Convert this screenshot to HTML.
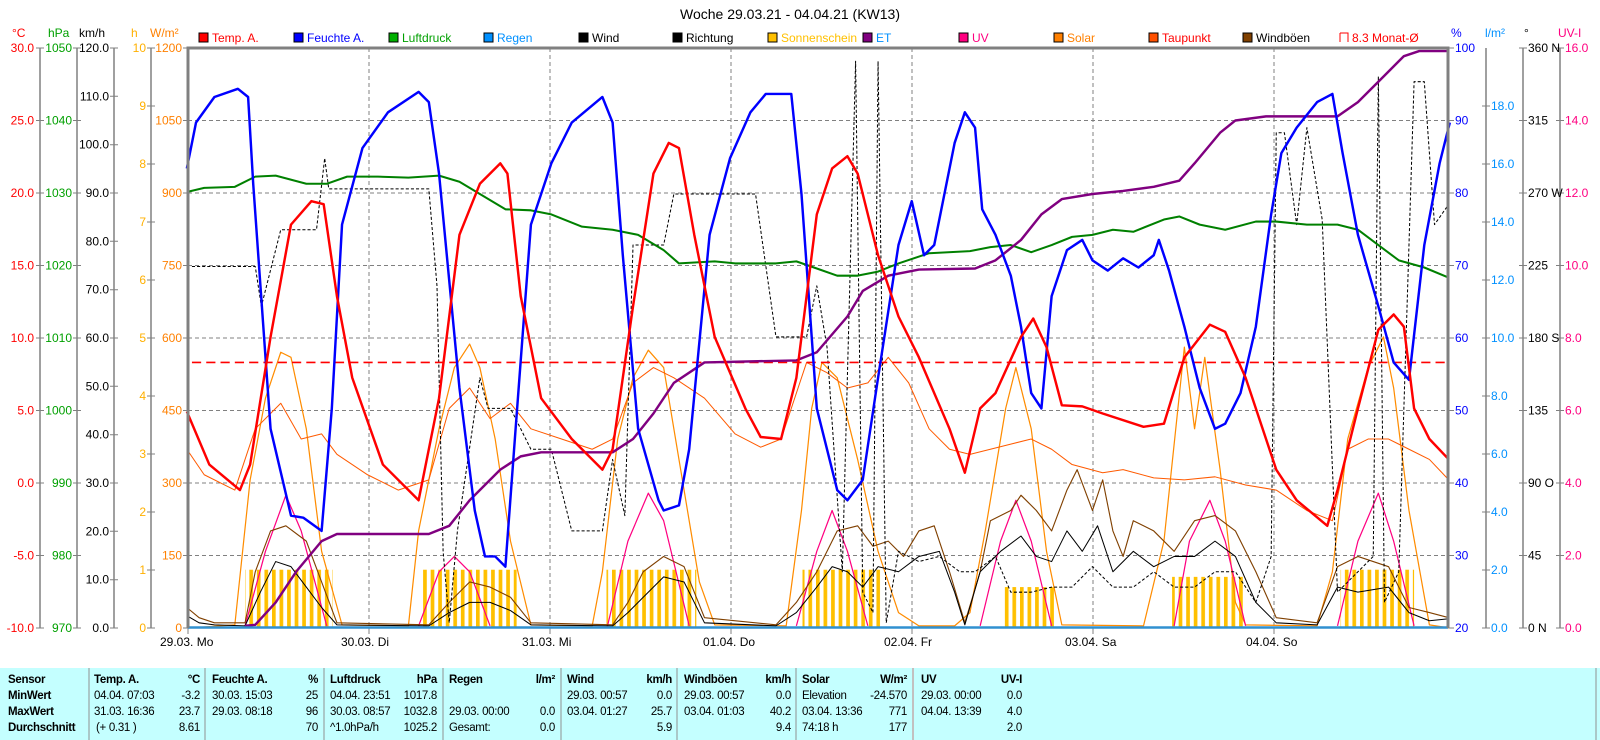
<!DOCTYPE html>
<html><head><meta charset="utf-8"><style>
html,body{margin:0;padding:0;background:#fff;width:1600px;height:740px;overflow:hidden}
svg{display:block;font-family:"Liberation Sans",sans-serif}
</style></head><body>
<svg width="1600" height="740" viewBox="0 0 1600 740" xmlns="http://www.w3.org/2000/svg">
<defs>
<pattern id="bars" x="0" y="0" width="7.4" height="100" patternUnits="userSpaceOnUse"><rect x="0" y="0" width="3.6" height="100" fill="#ffc000"/></pattern>
</defs>
<text x="790" y="19" font-size="14" text-anchor="middle" fill="#000">Woche 29.03.21 - 04.04.21 (KW13)</text>
<!-- axis headers -->
<g font-size="12">
<text x="12" y="37" fill="#f00">°C</text>
<text x="48" y="37" fill="#00a000">hPa</text>
<text x="79" y="37" fill="#000">km/h</text>
<text x="131" y="37" fill="#ffb000">h</text>
<text x="150" y="37" fill="#ff8000">W/m²</text>
<text x="1451" y="37" fill="#0000ff">%</text>
<text x="1485" y="37" fill="#0090ff">l/m²</text>
<text x="1524" y="37" fill="#000">°</text>
<text x="1558" y="37" fill="#ff0080">UV-I</text>
</g>
<!-- legend -->
<g font-size="12">
<rect x="199" y="33" width="9" height="9" fill="#f00" stroke="#000"/><text x="212" y="42" fill="#f00">Temp. A.</text>
<rect x="294" y="33" width="9" height="9" fill="#00f" stroke="#000"/><text x="307" y="42" fill="#00f">Feuchte A.</text>
<rect x="389" y="33" width="9" height="9" fill="#00b000" stroke="#000"/><text x="402" y="42" fill="#00a000">Luftdruck</text>
<rect x="484" y="33" width="9" height="9" fill="#0090ff" stroke="#000"/><text x="497" y="42" fill="#0090ff">Regen</text>
<rect x="579" y="33" width="9" height="9" fill="#000" stroke="#000"/><text x="592" y="42" fill="#000">Wind</text>
<rect x="673" y="33" width="9" height="9" fill="#000" stroke="#000"/><text x="686" y="42" fill="#000">Richtung</text>
<rect x="768" y="33" width="9" height="9" fill="#ffc000" stroke="#000"/><text x="781" y="42" fill="#ffc000">Sonnenschein</text>
<rect x="863" y="33" width="9" height="9" fill="#800080" stroke="#000"/><text x="876" y="42" fill="#0090ff">ET</text>
<rect x="959" y="33" width="9" height="9" fill="#ff0080" stroke="#000"/><text x="972" y="42" fill="#ff0080">UV</text>
<rect x="1054" y="33" width="9" height="9" fill="#ff8000" stroke="#000"/><text x="1067" y="42" fill="#ff8000">Solar</text>
<rect x="1149" y="33" width="9" height="9" fill="#ff5000" stroke="#000"/><text x="1162" y="42" fill="#f00">Taupunkt</text>
<rect x="1243" y="33" width="9" height="9" fill="#804000" stroke="#000"/><text x="1256" y="42" fill="#000">Windböen</text>
<path d="M1340 33 V42 M1340 33 H1348 V42" stroke="#f00" fill="none"/><text x="1352" y="42" fill="#f00">8.3 Monat-Ø</text>
</g>
<!-- left axes -->
<g stroke="#808080" stroke-width="1.5" fill="none">
<path d="M40 48V628M77 48V628M114 48V628M151 48V628"/>
<path d="M1486 48V628M1523 48V628M1560 48V628"/>
</g>
<g stroke="#808080" stroke-width="1">
<path d="M36 48h8M36 120.5h8M36 193h8M36 265.5h8M36 338h8M36 410.5h8M36 483h8M36 555.5h8M36 628h8"/>
<path d="M73 48h8M73 120.5h8M73 193h8M73 265.5h8M73 338h8M73 410.5h8M73 483h8M73 555.5h8M73 628h8"/>
<path d="M110 48h8M110 96.3h8M110 144.7h8M110 193h8M110 241.3h8M110 289.7h8M110 338h8M110 386.3h8M110 434.7h8M110 483h8M110 531.3h8M110 579.7h8M110 628h8"/>
<path d="M147 48h8M147 106h8M147 164h8M147 222h8M147 280h8M147 338h8M147 396h8M147 454h8M147 512h8M147 570h8M147 628h8"/>
<path d="M183 48h5M183 120.5h5M183 193h5M183 265.5h5M183 338h5M183 410.5h5M183 483h5M183 555.5h5M183 628h5"/>
<path d="M1448 48h6M1448 120.5h6M1448 193h6M1448 265.5h6M1448 338h6M1448 410.5h6M1448 483h6M1448 555.5h6M1448 628h6"/>
<path d="M1482 106h8M1482 164h8M1482 222h8M1482 280h8M1482 338h8M1482 396h8M1482 454h8M1482 512h8M1482 570h8M1482 628h8"/>
<path d="M1519 48h8M1519 120.5h8M1519 193h8M1519 265.5h8M1519 338h8M1519 410.5h8M1519 483h8M1519 555.5h8M1519 628h8"/>
<path d="M1556 48h8M1556 120.5h8M1556 193h8M1556 265.5h8M1556 338h8M1556 410.5h8M1556 483h8M1556 555.5h8M1556 628h8"/>
</g>
<g font-size="12" text-anchor="end">
<g fill="#f00"><text x="34" y="52">30.0</text><text x="34" y="124.5">25.0</text><text x="34" y="197">20.0</text><text x="34" y="269.5">15.0</text><text x="34" y="342">10.0</text><text x="34" y="414.5">5.0</text><text x="34" y="487">0.0</text><text x="34" y="559.5">-5.0</text><text x="34" y="632">-10.0</text></g>
<g fill="#00a000"><text x="72" y="52">1050</text><text x="72" y="124.5">1040</text><text x="72" y="197">1030</text><text x="72" y="269.5">1020</text><text x="72" y="342">1010</text><text x="72" y="414.5">1000</text><text x="72" y="487">990</text><text x="72" y="559.5">980</text><text x="72" y="632">970</text></g>
<g fill="#000"><text x="109" y="52">120.0</text><text x="109" y="100.3">110.0</text><text x="109" y="148.7">100.0</text><text x="109" y="197">90.0</text><text x="109" y="245.3">80.0</text><text x="109" y="293.7">70.0</text><text x="109" y="342">60.0</text><text x="109" y="390.3">50.0</text><text x="109" y="438.7">40.0</text><text x="109" y="487">30.0</text><text x="109" y="535.3">20.0</text><text x="109" y="583.7">10.0</text><text x="109" y="632">0.0</text></g>
<g fill="#ffb000"><text x="146" y="52">10</text><text x="146" y="110">9</text><text x="146" y="168">8</text><text x="146" y="226">7</text><text x="146" y="284">6</text><text x="146" y="342">5</text><text x="146" y="400">4</text><text x="146" y="458">3</text><text x="146" y="516">2</text><text x="146" y="574">1</text><text x="146" y="632">0</text></g>
<g fill="#ff8000"><text x="182" y="52">1200</text><text x="182" y="124.5">1050</text><text x="182" y="197">900</text><text x="182" y="269.5">750</text><text x="182" y="342">600</text><text x="182" y="414.5">450</text><text x="182" y="487">300</text><text x="182" y="559.5">150</text><text x="182" y="632">0</text></g>
</g>
<g font-size="12">
<g fill="#0000ff"><text x="1455" y="52">100</text><text x="1455" y="124.5">90</text><text x="1455" y="197">80</text><text x="1455" y="269.5">70</text><text x="1455" y="342">60</text><text x="1455" y="414.5">50</text><text x="1455" y="487">40</text><text x="1455" y="559.5">30</text><text x="1455" y="632">20</text></g>
<g fill="#0090ff"><text x="1491" y="110">18.0</text><text x="1491" y="168">16.0</text><text x="1491" y="226">14.0</text><text x="1491" y="284">12.0</text><text x="1491" y="342">10.0</text><text x="1491" y="400">8.0</text><text x="1491" y="458">6.0</text><text x="1491" y="516">4.0</text><text x="1491" y="574">2.0</text><text x="1491" y="632">0.0</text></g>
<g fill="#000"><text x="1528" y="52">360 N</text><text x="1528" y="124.5">315</text><text x="1528" y="197">270 W</text><text x="1528" y="269.5">225</text><text x="1528" y="342">180 S</text><text x="1528" y="414.5">135</text><text x="1528" y="487">90  O</text><text x="1528" y="559.5">45</text><text x="1528" y="632">0    N</text></g>
<g fill="#ff0080"><text x="1565" y="52">16.0</text><text x="1565" y="124.5">14.0</text><text x="1565" y="197">12.0</text><text x="1565" y="269.5">10.0</text><text x="1565" y="342">8.0</text><text x="1565" y="414.5">6.0</text><text x="1565" y="487">4.0</text><text x="1565" y="559.5">2.0</text><text x="1565" y="632">0.0</text></g>
</g>
<!-- grid -->
<g stroke="#808080" stroke-width="1" stroke-dasharray="4,3">
<path d="M188 120.5H1448M188 193H1448M188 265.5H1448M188 338H1448M188 410.5H1448M188 483H1448M188 555.5H1448"/>
<path d="M369 48V628M550 48V628M731 48V628M912 48V628M1093 48V628M1274 48V628"/>
</g>
<g stroke="#808080"><path d="M188 628v6M369 628v6M550 628v6M731 628v6M912 628v6M1093 628v6M1274 628v6"/></g>
<g font-size="12" fill="#000">
<text x="160" y="646">29.03.  Mo</text><text x="341" y="646">30.03.  Di</text><text x="522" y="646">31.03.  Mi</text><text x="703" y="646">01.04.  Do</text><text x="884" y="646">02.04.  Fr</text><text x="1065" y="646">03.04.  Sa</text><text x="1246" y="646">04.04.  So</text>
</g>
<!-- data in perceived coords -->
<g transform="scale(1.021)" fill="none" stroke-linejoin="round">
<g fill="url(#bars)">
<rect x="240" y="558" width="86" height="57"/><rect x="414" y="558" width="92" height="57"/><rect x="594" y="558" width="88" height="57"/><rect x="786" y="558" width="76" height="57"/><rect x="983" y="575" width="50" height="40"/><rect x="1148" y="565" width="70" height="50"/><rect x="1313" y="558" width="72" height="57"/>
</g>
<polyline stroke="#ff8c00" stroke-width="1.2" points="188,615 230,612 245,470 260,390 275,345 285,350 300,420 315,540 335,612 400,613 410,520 430,420 445,360 460,337 470,360 485,430 500,530 520,612 580,613 590,560 605,430 620,370 635,343 650,360 665,450 685,570 700,612 770,613 785,500 795,400 805,355 820,370 840,450 860,540 880,600 900,613 935,613 950,600 965,520 985,400 995,360 1010,420 1025,540 1040,612 1120,613 1140,530 1160,340 1170,420 1180,350 1195,460 1210,590 1220,612 1290,613 1305,560 1320,430 1340,360 1355,330 1365,380 1380,500 1400,612 1419,615"/>
<polyline stroke="#ff5a00" stroke-width="1" points="183,440 200,465 230,480 250,420 275,395 295,430 315,425 330,445 360,465 390,480 420,470 440,400 460,380 480,410 500,395 520,420 550,430 580,440 600,430 620,375 640,360 660,370 690,390 720,425 745,438 765,430 790,355 810,365 830,380 850,375 870,350 890,375 910,420 930,440 950,445 970,440 990,435 1010,430 1030,440 1050,455 1080,463 1100,460 1130,468 1160,470 1190,467 1220,475 1250,480 1280,500 1305,510 1320,440 1340,430 1360,430 1380,440 1400,450 1419,470"/>
<g stroke="#ff0080" stroke-width="1.2">
<polyline points="240,613 260,540 280,485 295,520 320,613"/>
<polyline points="410,613 430,560 445,545 460,560 480,613"/>
<polyline points="595,613 615,530 635,483 650,510 675,613"/>
<polyline points="780,613 800,540 815,500 830,540 850,613"/>
<polyline points="960,613 980,530 995,490 1010,530 1030,613"/>
<polyline points="1150,613 1165,530 1185,490 1200,530 1220,613"/>
<polyline points="1310,613 1330,530 1350,483 1365,530 1385,613"/>
</g>
<polyline stroke="#804000" stroke-width="1.1" points="183,595 195,605 210,610 240,610 250,560 265,520 280,515 300,530 315,570 330,610 420,612 440,590 460,570 480,575 500,585 520,610 600,612 615,590 630,560 650,545 670,555 690,605 760,612 780,590 800,560 820,520 840,515 855,535 870,530 885,545 900,520 915,515 930,560 945,610 960,560 970,510 990,500 1000,485 1015,500 1030,520 1045,480 1055,460 1070,500 1080,470 1090,520 1100,545 1110,510 1130,520 1150,540 1170,510 1190,505 1210,520 1230,560 1250,605 1290,610 1310,555 1330,545 1360,555 1380,595 1400,600 1419,605"/>
<polyline stroke="#000" stroke-width="1" points="183,603 195,610 210,612 240,613 255,580 270,550 285,555 300,575 315,595 330,612 420,613 440,600 460,590 480,590 500,598 520,612 600,613 615,600 630,585 650,565 670,570 690,610 760,613 780,600 800,575 815,555 830,560 845,575 860,555 880,560 900,545 920,540 935,580 945,612 960,560 980,540 1000,525 1015,545 1030,550 1045,520 1060,540 1075,515 1090,560 1110,540 1130,555 1150,545 1170,545 1190,530 1210,545 1230,590 1250,610 1290,612 1310,575 1330,580 1360,575 1380,600 1400,608 1419,606"/>
<polyline stroke="#000" stroke-width="1" stroke-dasharray="3,2" points="188,261 250,261 256,300 275,225 310,225 318,155 322,185 420,185 428,280 434,540 440,610 448,520 470,370 478,400 500,400 520,440 540,440 560,520 590,520 600,450 612,505 620,240 650,240 660,190 700,190 740,190 760,330 775,330 790,330 800,280 810,340 825,560 838,60 845,580 855,600 860,60 868,610 880,540 900,550 920,545 940,560 955,560 975,545 990,580 1010,580 1030,575 1050,575 1070,555 1090,575 1110,575 1130,560 1150,575 1170,575 1190,560 1210,560 1230,590 1245,545 1250,130 1258,130 1270,220 1280,125 1295,215 1310,580 1330,560 1345,545 1350,75 1356,590 1370,560 1385,80 1395,80 1405,220 1419,200"/>
<line x1="188" y1="355" x2="1419" y2="355" stroke="#f00" stroke-width="1.6" stroke-dasharray="9,5"/>
<polyline stroke="#008000" stroke-width="2" points="183,188 200,184 230,183 250,173 270,172 300,180 320,180 340,173 370,173 400,174 430,172 450,178 470,190 495,205 520,206 540,210 570,222 600,225 625,230 650,245 665,258 700,256 720,258 760,258 780,256 800,263 820,270 840,270 860,266 880,258 910,248 950,246 970,242 990,240 1010,247 1030,240 1050,232 1070,230 1090,225 1110,227 1140,215 1155,212 1175,220 1200,225 1230,217 1250,217 1280,220 1310,220 1330,225 1350,240 1370,255 1395,262 1419,272"/>
<polyline stroke="#800080" stroke-width="2.4" points="240,613 250,612 270,590 290,560 315,530 330,523 420,523 440,515 460,490 490,460 510,447 530,443 600,443 620,430 640,405 660,375 690,355 780,353 800,345 830,310 845,285 870,270 900,264 955,263 975,255 1000,235 1020,210 1040,195 1070,190 1100,187 1130,183 1155,177 1170,160 1195,130 1210,118 1240,114 1310,114 1330,100 1355,75 1375,55 1390,50 1419,50"/>
<polyline stroke="#0000ff" stroke-width="2.4" points="183,165 192,120 210,95 233,87 243,95 248,180 265,420 285,505 297,507 315,520 325,400 335,220 355,145 380,110 410,90 420,100 430,170 450,380 465,500 475,545 485,545 495,555 505,420 520,220 540,160 560,120 590,95 600,120 610,250 625,420 645,490 650,500 665,495 675,440 695,230 715,155 735,110 750,92 775,92 785,190 800,400 820,480 830,490 845,470 860,370 880,240 893,197 905,250 915,240 935,140 945,110 955,125 962,205 975,230 990,270 1000,320 1010,385 1020,400 1030,290 1045,245 1060,235 1070,255 1085,265 1100,253 1115,262 1130,250 1135,235 1145,265 1160,320 1175,380 1190,420 1200,415 1215,385 1230,320 1245,210 1255,150 1270,125 1290,100 1305,92 1315,150 1330,230 1350,300 1365,355 1380,372 1395,240 1410,160 1420,120"/>
<polyline stroke="#f00" stroke-width="2.4" points="183,403 205,455 235,480 245,455 265,330 285,220 305,197 317,200 330,290 345,370 375,455 410,490 430,390 450,230 470,180 490,160 497,170 510,290 530,390 560,430 590,460 600,440 620,300 640,170 655,140 665,145 680,230 700,330 730,400 745,428 765,430 780,370 800,210 815,165 830,153 840,170 860,250 880,310 900,350 930,420 945,463 960,400 975,385 1000,330 1012,312 1025,340 1040,397 1060,398 1080,405 1120,418 1140,415 1160,350 1185,318 1200,325 1220,370 1250,460 1270,490 1300,515 1310,480 1330,400 1350,323 1365,308 1375,320 1385,400 1400,430 1419,450"/>
</g>
<line x1="188" y1="627.5" x2="1448" y2="627.5" stroke="#3090d0" stroke-width="2.5"/>
<path d="M188 628V48H1448V628" stroke="#808080" stroke-width="3" fill="none"/>
<!-- table -->
<rect x="0" y="668" width="1600" height="72" fill="#c4ffff"/>
<g stroke="#909090" stroke-width="1"><path d="M89 668V740M205 668V740M324 668V740M443 668V740M561 668V740M677 668V740M796 668V740"/></g>
<path d="M913 668V740" stroke="#c08080"/>
<path d="M1596 668V740" stroke="#909090"/>
<g font-size="11.5" fill="#000" letter-spacing="-0.3">
<g font-weight="bold"><text x="8" y="683">Sensor</text><text x="8" y="699">MinWert</text><text x="8" y="715">MaxWert</text><text x="8" y="731">Durchschnitt</text>
<text x="94" y="683">Temp. A.</text><text x="212" y="683">Feuchte A.</text><text x="330" y="683">Luftdruck</text><text x="449" y="683">Regen</text><text x="567" y="683">Wind</text><text x="684" y="683">Windböen</text><text x="802" y="683">Solar</text><text x="921" y="683">UV</text>
<g text-anchor="end"><text x="200" y="683">°C</text><text x="318" y="683">%</text><text x="437" y="683">hPa</text><text x="555" y="683">l/m²</text><text x="672" y="683">km/h</text><text x="791" y="683">km/h</text><text x="907" y="683">W/m²</text><text x="1022" y="683">UV-I</text></g></g>
<text x="94" y="699">04.04.  07:03</text><text x="94" y="715">31.03.  16:36</text><text x="96" y="731">(+ 0.31 )</text>
<text x="212" y="699">30.03.  15:03</text><text x="212" y="715">29.03.  08:18</text>
<text x="330" y="699">04.04.  23:51</text><text x="330" y="715">30.03.  08:57</text><text x="330" y="731">^1.0hPa/h</text>
<text x="449" y="715">29.03.  00:00</text><text x="449" y="731">Gesamt:</text>
<text x="567" y="699">29.03.  00:57</text><text x="567" y="715">03.04.  01:27</text>
<text x="684" y="699">29.03.  00:57</text><text x="684" y="715">03.04.  01:03</text>
<text x="802" y="699">Elevation</text><text x="802" y="715">03.04.  13:36</text><text x="802" y="731">74:18 h</text>
<text x="921" y="699">29.03.  00:00</text><text x="921" y="715">04.04.  13:39</text>
<g text-anchor="end">
<text x="200" y="699">-3.2</text><text x="200" y="715">23.7</text><text x="200" y="731">8.61</text>
<text x="318" y="699">25</text><text x="318" y="715">96</text><text x="318" y="731">70</text>
<text x="437" y="699">1017.8</text><text x="437" y="715">1032.8</text><text x="437" y="731">1025.2</text>
<text x="555" y="715">0.0</text><text x="555" y="731">0.0</text>
<text x="672" y="699">0.0</text><text x="672" y="715">25.7</text><text x="672" y="731">5.9</text>
<text x="791" y="699">0.0</text><text x="791" y="715">40.2</text><text x="791" y="731">9.4</text>
<text x="907" y="699">-24.570</text><text x="907" y="715">771</text><text x="907" y="731">177</text>
<text x="1022" y="699">0.0</text><text x="1022" y="715">4.0</text><text x="1022" y="731">2.0</text>
</g>
</g>
</svg>
</body></html>
